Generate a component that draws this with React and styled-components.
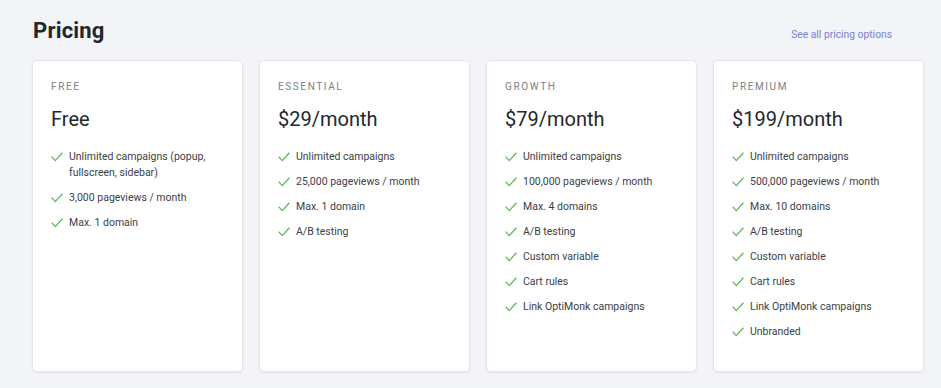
import React from "react";
import styled, { createGlobalStyle } from "styled-components";

const Global = createGlobalStyle`
  html, body { margin: 0; padding: 0; background: #f3f4f7; }
  body { font-family: Roboto, "Liberation Sans", Arial, sans-serif; color: #2b2f36; }
`;

const Page = styled.div`
  padding: 16px 18px 17px 33px;
  box-sizing: border-box;
  width: 941px;
`;

const Header = styled.div`
  display: flex;
  align-items: center;
  justify-content: space-between;
  height: 28px;
  margin-bottom: 17px;
`;

const Title = styled.h1`
  margin: 0;
  font-size: 22px;
  font-weight: 700;
  color: #22262d;
  letter-spacing: 0.2px;
`;

const Link = styled.a`
  font-size: 10.3px;
  color: #7c80d4;
  text-decoration: none;
  margin-right: 31px;
  margin-top: 9px;
`;

const Grid = styled.div`
  display: grid;
  grid-template-columns: repeat(4, 1fr);
  gap: 18px;
`;

const Card = styled.div`
  background: #fff;
  border-radius: 4px;
  box-shadow: 0 0 0 1px #e3e5ea, 0 1px 3px rgba(30, 40, 60, 0.12);
  padding: 19px 18px 0;
  min-height: 310px;
  box-sizing: border-box;
`;

const Label = styled.div`
  font-size: 10px;
  line-height: 14px;
  letter-spacing: 1.6px;
  color: #7b8188;
  text-transform: uppercase;
`;

const Price = styled.div`
  font-size: 20px;
  line-height: 26px;
  margin-top: 12px;
  color: #23272e;
`;

const List = styled.ul`
  list-style: none;
  margin: 17px 0 0;
  padding: 0;
  display: flex;
  flex-direction: column;
  gap: 9px;
`;

const Item = styled.li`
  display: flex;
  align-items: flex-start;
  gap: 6px;
  font-size: 10.5px;
  line-height: 16px;
  color: #3c4047;
`;

const Check = styled.svg`
  flex: none;
  width: 12px;
  height: 10px;
  margin-top: 3px;
`;

const CheckIcon = () => (
  <Check viewBox="0 0 12 10">
    <polyline points="0.6,4.6 4.3,8.6 11.4,0.8" fill="none" stroke="#5cb85c" strokeWidth="1.3" />
  </Check>
);

const plans = [
  { name: "Free", price: "Free", features: ["Unlimited campaigns (popup, fullscreen, sidebar)", "3,000 pageviews / month", "Max. 1 domain"] },
  { name: "Essential", price: "$29/month", features: ["Unlimited campaigns", "25,000 pageviews / month", "Max. 1 domain", "A/B testing"] },
  { name: "Growth", price: "$79/month", features: ["Unlimited campaigns", "100,000 pageviews / month", "Max. 4 domains", "A/B testing", "Custom variable", "Cart rules", "Link OptiMonk campaigns"] },
  { name: "Premium", price: "$199/month", features: ["Unlimited campaigns", "500,000 pageviews / month", "Max. 10 domains", "A/B testing", "Custom variable", "Cart rules", "Link OptiMonk campaigns", "Unbranded"] },
];

export default function App() {
  return (
    <>
      <Global />
      <Page>
        <Header>
          <Title>Pricing</Title>
          <Link href="#">See all pricing options</Link>
        </Header>
        <Grid>
          {plans.map((p) => (
            <Card key={p.name}>
              <Label>{p.name}</Label>
              <Price>{p.price}</Price>
              <List>
                {p.features.map((f) => (
                  <Item key={f}>
                    <CheckIcon />
                    <span>{f}</span>
                  </Item>
                ))}
              </List>
            </Card>
          ))}
        </Grid>
      </Page>
    </>
  );
}
